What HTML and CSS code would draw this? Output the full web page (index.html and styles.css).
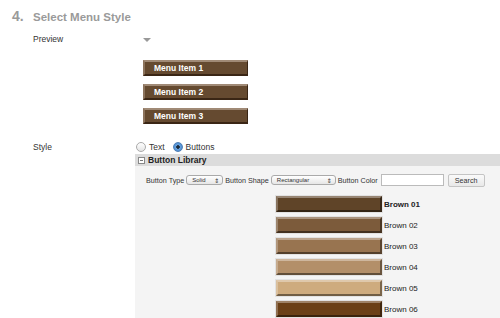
FILE: index.html
```html
<!DOCTYPE html>
<html lang="en">
<head>
    <meta charset="UTF-8">
    <title>Select Menu Style</title>
    <link rel="stylesheet" href="styles.css">
</head>
<body>
    <div class="heading">
        <span class="step">4.</span>
        <span class="title">Select Menu Style</span>
    </div>

    <div class="row preview-row">
        <div class="label">Preview</div>
        <div class="preview">
            <div class="arrow"></div>
            <div class="menu-item">Menu Item 1</div>
            <div class="menu-item">Menu Item 2</div>
            <div class="menu-item">Menu Item 3</div>
        </div>
    </div>

    <div class="row style-row">
        <div class="label">Style</div>
        <div class="field">
            <div class="radios">
                <span class="radio"></span><span>Text</span>
                <span class="radio checked"></span><span>Buttons</span>
            </div>
            <div class="panel">
                <div class="panel-header">
                    <span class="toggle"></span>
                    Button Library
                </div>
                <div class="panel-body">
                    <div class="filters">
                        <span>Button Type</span>
                        <span class="select small">Solid<i>&#8661;</i></span>
                        <span>Button Shape</span>
                        <span class="select wide">Rectangular<i>&#8661;</i></span>
                        <span>Button Color</span>
                        <span class="input"></span>
                        <span class="search">Search</span>
                    </div>
                    <div class="swatches">
                        <div class="swatch-row"><div class="swatch c1"></div><span class="name selected">Brown 01</span></div>
                        <div class="swatch-row"><div class="swatch c2"></div><span class="name">Brown 02</span></div>
                        <div class="swatch-row"><div class="swatch c3"></div><span class="name">Brown 03</span></div>
                        <div class="swatch-row"><div class="swatch c4"></div><span class="name">Brown 04</span></div>
                        <div class="swatch-row"><div class="swatch c5"></div><span class="name">Brown 05</span></div>
                        <div class="swatch-row"><div class="swatch c6"></div><span class="name">Brown 06</span></div>
                    </div>
                </div>
            </div>
        </div>
    </div>
</body>
</html>
```

FILE: styles.css
```css
body {
    margin: 0;
    font-family: "Liberation Sans", "DejaVu Sans", sans-serif;
    font-size: 8.5px;
    color: #333;
    background-color: #fff;
    overflow: hidden;
}
.heading {
    display: flex;
    align-items: baseline;
    padding: 8px 0 0 12px;
    color: #9a9a9a;
    font-weight: bold;
}
.step {
    font-size: 14px;
    width: 21px;
}
.title {
    font-size: 11.5px;
}
.row {
    display: grid;
    grid-template-columns: 135px 1fr;
}
.label {
    padding-left: 33px;
    color: #333;
}
.preview-row {
    margin-top: 10px;
}
.preview {
    padding-left: 8px;
}
.arrow {
    width: 0;
    height: 0;
    border-left: 4px solid transparent;
    border-right: 4px solid transparent;
    border-top: 4px solid #999;
    margin: 4px 0 18px 0;
}
.menu-item {
    width: 93px;
    height: 12px;
    line-height: 12px;
    padding-left: 9px;
    margin-bottom: 8px;
    color: #fff;
    font-weight: bold;
    font-size: 8.5px;
    background-color: #654a30;
    border-top: 2px solid #a08a76;
    border-left: 2px solid #8c735c;
    border-right: 1px solid #3a2615;
    border-bottom: 2px solid #3a2615;
}
.style-row {
    margin-top: 8px;
}
.style-row .label {
    padding-top: 2px;
}
.radios {
    display: flex;
    align-items: center;
    gap: 3px;
    padding: 1px 0 0 1px;
    height: 11px;
}
.radio {
    width: 10px;
    height: 10px;
    border-radius: 50%;
    border: 1px solid #aaa;
    background: linear-gradient(#fff, #e4e4e4);
    box-sizing: border-box;
}
.radio.checked {
    margin-left: 5px;
    border-color: #4f7fb5;
    background: radial-gradient(circle, #1b2a3a 0 1.5px, #6aa4e0 2px, #3b7cc4 100%);
}
.panel {
    margin-top: 2px;
}
.panel-header {
    display: flex;
    align-items: center;
    gap: 3px;
    height: 12px;
    padding-left: 3px;
    background-color: #dcdcdc;
    font-weight: bold;
    font-size: 8.5px;
    color: #222;
}
.toggle {
    width: 5px;
    height: 5px;
    border: 1px solid #888;
    background: linear-gradient(#777, #777) center / 3px 1px no-repeat, #fff;
}
.panel-body {
    background-color: #f4f4f4;
    padding: 8px 0 0 11px;
    height: 150px;
    font-size: 7.2px;
}
.filters {
    display: flex;
    align-items: center;
    gap: 2px;
    height: 12px;
    white-space: nowrap;
}
.select {
    display: flex;
    justify-content: space-between;
    align-items: center;
    height: 8px;
    padding: 0 3px 0 5px;
    border: 1px solid #aaa;
    border-radius: 3px;
    background: linear-gradient(#fff, #e6e6e6);
    font-size: 6px;
}
.select i {
    font-style: normal;
    font-size: 6px;
}
.select.small {
    width: 27px;
}
.select.wide {
    width: 55px;
}
.input {
    width: 61px;
    height: 10px;
    margin-left: 1px;
    border: 1px solid #bbb;
    background-color: #fff;
}
.search {
    margin-left: 2px;
    padding: 1px 6px;
    border: 1px solid #c4c4c4;
    border-radius: 2px;
    background: linear-gradient(#fafafa, #e8e8e8);
}
.swatches {
    margin: 10px 0 0 130px;
}
.swatch-row {
    display: flex;
    align-items: center;
    gap: 2px;
    margin-bottom: 5px;
}
.swatch {
    width: 102px;
    height: 12px;
    border-top: 2px solid rgba(255, 255, 255, 0.35);
    border-left: 2px solid rgba(255, 255, 255, 0.25);
    border-right: 2px solid rgba(0, 0, 0, 0.4);
    border-bottom: 2px solid rgba(0, 0, 0, 0.45);
    box-shadow: 0 0 0 1px #e2e2e2;
}
.name {
    font-size: 8px;
    color: #222;
}
.name.selected {
    font-weight: bold;
}
.c1 { background-color: #5f4428; }
.c2 { background-color: #7c5b3b; }
.c3 { background-color: #987450; }
.c4 { background-color: #b38f69; }
.c5 { background-color: #ceab7e; }
.c6 { background-color: #6b4017; }
```
